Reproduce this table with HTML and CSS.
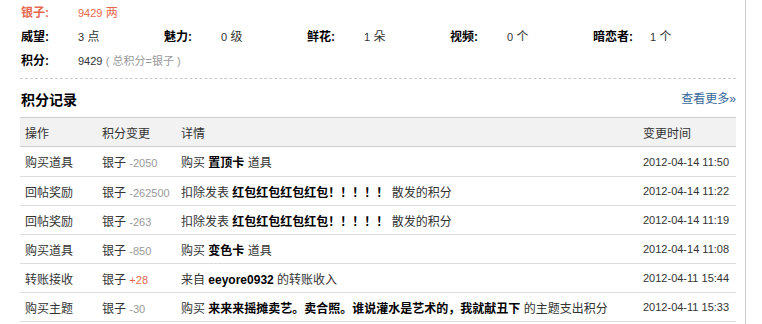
FILE: index.html
```html
<!DOCTYPE html>
<html>
<head>
<meta charset="utf-8">
<link rel="stylesheet" href="styles.css">
</head>
<body>
<div class="panel">
  <div class="stats">
    <div class="line money"><span class="lbl">银子:</span><span class="val"><span class="n">9429</span> 两</span></div>
    <div class="line">
      <div class="item"><span class="lbl">威望:</span><span class="val"><span class="n">3</span> 点</span></div>
      <div class="item"><span class="lbl">魅力:</span><span class="val"><span class="n">0</span> 级</span></div>
      <div class="item"><span class="lbl">鲜花:</span><span class="val"><span class="n">1</span> 朵</span></div>
      <div class="item"><span class="lbl">视频:</span><span class="val"><span class="n">0</span> 个</span></div>
      <div class="item"><span class="lbl">暗恋者:</span><span class="val"><span class="n">1</span> 个</span></div>
    </div>
    <div class="line"><span class="lbl">积分:</span><span class="val"><span class="n">9429</span> <span class="note">( 总积分=银子 )</span></span></div>
  </div>
  <div class="head">
    <h2 class="title">积分记录</h2>
    <a class="more" href="#">查看更多»</a>
  </div>
  <table class="log">
    <thead>
      <tr><th class="c1">操作</th><th class="c2">积分变更</th><th class="c3">详情</th><th class="c4">变更时间</th></tr>
    </thead>
    <tbody>
      <tr><td>购买道具</td><td>银子 <span class="minus">-2050</span></td><td>购买 <b>置顶卡</b> 道具</td><td class="num">2012-04-14 11:50</td></tr>
      <tr><td>回帖奖励</td><td>银子 <span class="minus">-262500</span></td><td>扣除发表 <b>红包红包红包红包！！！！！</b> 散发的积分</td><td class="num">2012-04-14 11:22</td></tr>
      <tr><td>回帖奖励</td><td>银子 <span class="minus">-263</span></td><td>扣除发表 <b>红包红包红包红包！！！！！</b> 散发的积分</td><td class="num">2012-04-14 11:19</td></tr>
      <tr><td>购买道具</td><td>银子 <span class="minus">-850</span></td><td>购买 <b>变色卡</b> 道具</td><td class="num">2012-04-14 11:08</td></tr>
      <tr><td>转账接收</td><td>银子 <span class="plus">+28</span></td><td>来自 <b class="en">eeyore0932</b> 的转账收入</td><td class="num">2012-04-11 15:44</td></tr>
      <tr><td>购买主题</td><td>银子 <span class="minus">-30</span></td><td>购买 <b>来来来摇摊卖艺。卖合照。谁说灌水是艺术的，我就献丑下</b> 的主题支出积分</td><td class="num">2012-04-11 15:33</td></tr>
    </tbody>
  </table>
</div>
</body>
</html>
```
FILE: styles.css
```css
html, body {
  margin: 0;
  padding: 0;
  background: #fff;
}
body {
  font-family: "Liberation Sans", "Noto Sans CJK SC", sans-serif;
  font-size: 12px;
  color: #333;
}
.panel {
  width: 716px;
  padding: 1px 9px 0 20px;
  border-right: 1px solid #ccc;
  min-height: 323px;
}
.stats {
  padding-bottom: 5px;
  border-bottom: 1px dashed #ccc;
}
.line {
  display: flex;
  height: 24px;
  line-height: 24px;
  padding-left: 1px;
}
.item {
  display: flex;
  width: 143px;
}
.lbl {
  width: 57px;
  font-weight: bold;
  color: #000;
}
.val {
  color: #333;
}
.n {
  font-size: 11px;
}
.money .lbl, .money .val {
  color: #e8674f;
}
.note {
  color: #999;
  font-size: 11px;
}
.head {
  display: flex;
  justify-content: space-between;
  align-items: center;
  height: 38px;
}
.title {
  margin: 0;
  padding-left: 1px;
  font-size: 14px;
  font-weight: bold;
  color: #000;
  padding-top: 1px;
}
.more {
  color: #336699;
  text-decoration: none;
  padding-bottom: 2px;
}
.log {
  width: 716px;
  border-collapse: collapse;
  table-layout: fixed;
}
.log th {
  background: #f2f2f2;
  font-weight: normal;
  text-align: left;
  height: 28px;
  padding: 0 5px;
  border-top: 1px solid #ccc;
  border-bottom: 1px solid #ccc;
  color: #333;
}
.log td {
  height: 29px;
  padding: 0 5px;
  border-bottom: 1px solid #ddd;
  white-space: nowrap;
  color: #333;
}
.log tbody tr:nth-child(n+2) td {
  height: 28px;
}
.c1 { width: 67px; }
.c2 { width: 69px; }
.c4 { width: 88px; }
.log b {
  color: #000;
}
.num { font-size: 11px; }
.minus { color: #999; font-size: 11px; }
.plus { color: #e8674f; font-size: 11px; }
```
